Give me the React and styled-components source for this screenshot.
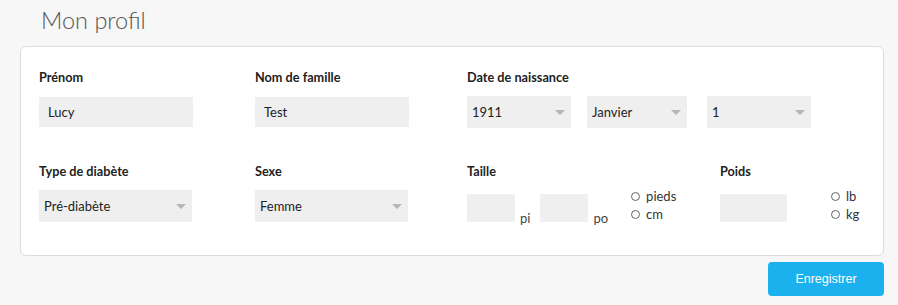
import styled, { createGlobalStyle } from "styled-components";

const GlobalStyle = createGlobalStyle`
  body {
    margin: 0;
    background: #f7f7f7;
    font-family: Lato, "Open Sans", sans-serif;
    color: #222;
  }
`;

const Page = styled.div`
  padding: 0 14px 0 20px;
`;

const Title = styled.h1`
  margin: 0 0 12px 21px;
  padding-top: 6px;
  font-size: 23.5px;
  line-height: 28px;
  font-weight: 300;
  color: #555;
`;

const Card = styled.div`
  background: #fff;
  border: 1px solid #dcdcdc;
  border-radius: 6px;
  padding: 22px 18px 33px;
  display: grid;
  grid-template-columns: 216px 212px 253px 1fr;
  row-gap: 35px;
`;

const Field = styled.div`
  grid-column: ${(p) => p.span || "auto"};
  display: flex;
  flex-direction: column;
`;

const Label = styled.div`
  font-size: 12.7px;
  font-weight: 700;
  line-height: 16px;
  margin-bottom: 11px;
`;

const TextInput = styled.div`
  width: ${(p) => p.w}px;
  height: ${(p) => p.h || 30}px;
  margin-top: 1px;
  background: #efefef;
  box-sizing: border-box;
  padding: 0 9px;
  font-size: 13px;
  display: flex;
  align-items: center;
`;

const Select = styled.div`
  position: relative;
  width: ${(p) => p.w}px;
  height: 32px;
  background: #efefef;
  box-sizing: border-box;
  padding: 0 5px;
  font-size: 13px;
  display: flex;
  align-items: center;
  &::after {
    content: "";
    position: absolute;
    right: 6px;
    top: 14px;
    border-left: 5px solid transparent;
    border-right: 5px solid transparent;
    border-top: 5px solid #b5b5b5;
  }
`;

const Row = styled.div`
  display: flex;
  gap: ${(p) => p.gap || 0}px;
  align-items: ${(p) => p.align || "flex-start"};
`;

const Unit = styled.span`
  font-size: 13px;
  color: #444;
  line-height: 13px;
  margin: 0 ${(p) => p.mr}px -3px 5px;
`;

const Radios = styled.div`
  display: flex;
  flex-direction: column;
  gap: 2px;
  margin-left: ${(p) => p.ml}px;
  margin-top: -2px;
`;

const RadioLine = styled.label`
  display: flex;
  align-items: center;
  gap: 6px;
  font-size: 13px;
  line-height: 16px;
  color: #333;
`;

const Circle = styled.span`
  width: 9px;
  height: 9px;
  border: 1px solid #666;
  border-radius: 50%;
  box-sizing: border-box;
`;

const Footer = styled.div`
  display: flex;
  justify-content: flex-end;
  margin-top: 6px;
`;

const SaveButton = styled.button`
  width: 116px;
  height: 34px;
  border: none;
  border-radius: 4px;
  background: #1bb1ef;
  color: #fff;
  font-family: "Liberation Sans", Arial, sans-serif;
  font-size: 12.5px;
`;

const Radio = ({ children }) => (
  <RadioLine>
    <Circle />
    {children}
  </RadioLine>
);

export default function App() {
  return (
    <>
      <GlobalStyle />
      <Page>
        <Title>Mon profil</Title>
        <Card>
          <Field>
            <Label>Prénom</Label>
            <TextInput w={154}>Lucy</TextInput>
          </Field>
          <Field>
            <Label>Nom de famille</Label>
            <TextInput w={154}>Test</TextInput>
          </Field>
          <Field span="3 / 5">
            <Label>Date de naissance</Label>
            <Row gap={16}>
              <Select w={104}>1911</Select>
              <Select w={100}>Janvier</Select>
              <Select w={104} style={{ marginLeft: 4 }}>1</Select>
            </Row>
          </Field>

          <Field>
            <Label>Type de diabète</Label>
            <Select w={153}>Pré-diabète</Select>
          </Field>
          <Field>
            <Label>Sexe</Label>
            <Select w={153}>Femme</Select>
          </Field>
          <Field>
            <Label>Taille</Label>
            <Row align="flex-end">
              <TextInput w={48} h={28} />
              <Unit mr={10}>pi</Unit>
              <TextInput w={48} h={28} />
              <Unit mr={0}>po</Unit>
              <Radios ml={23}>
                <Radio>pieds</Radio>
                <Radio>cm</Radio>
              </Radios>
            </Row>
          </Field>
          <Field>
            <Label>Poids</Label>
            <Row align="flex-end">
              <TextInput w={67} h={28} />
              <Radios ml={44}>
                <Radio>lb</Radio>
                <Radio>kg</Radio>
              </Radios>
            </Row>
          </Field>
        </Card>
        <Footer>
          <SaveButton>Enregistrer</SaveButton>
        </Footer>
      </Page>
    </>
  );
}
